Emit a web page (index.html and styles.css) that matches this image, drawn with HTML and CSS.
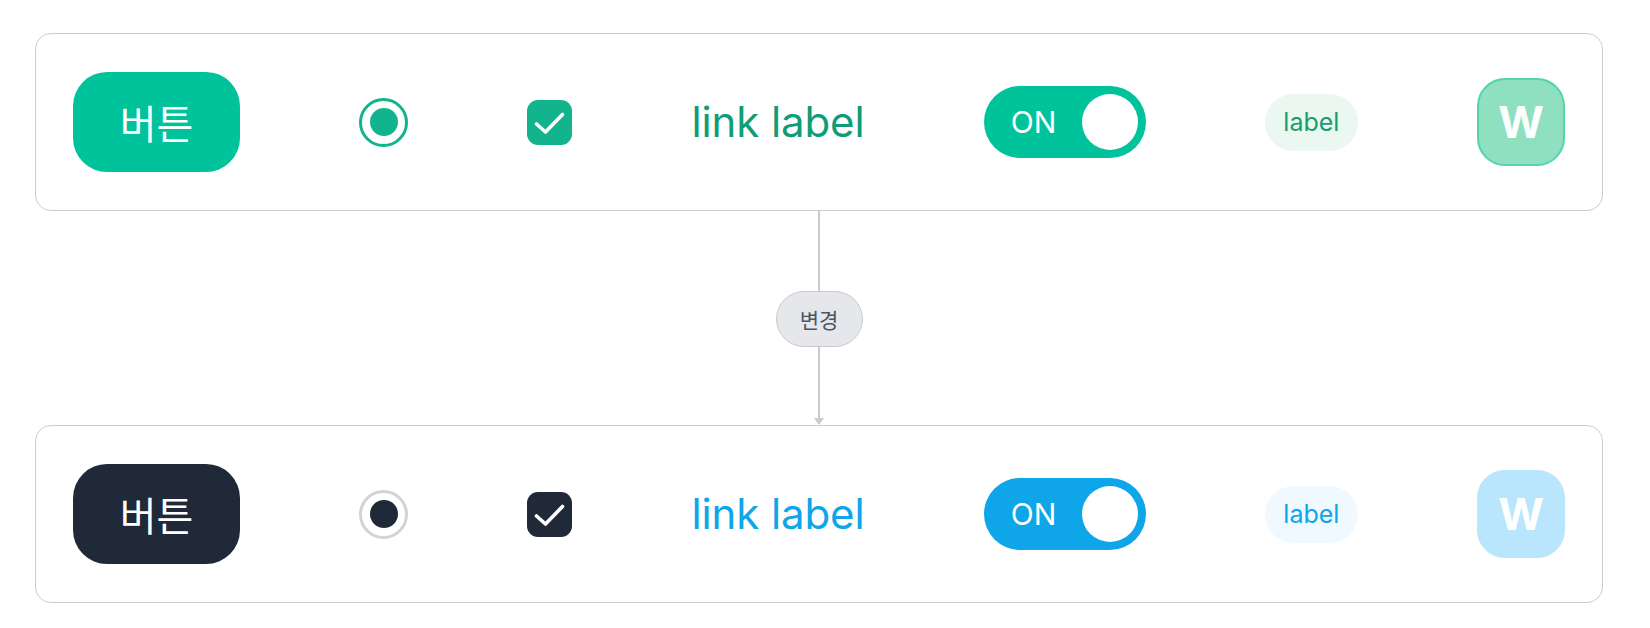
FILE: index.html
```html
<!DOCTYPE html>
<html lang="ko">
<head>
<meta charset="utf-8">
<title>Theme change</title>
<link rel="stylesheet" href="styles.css">
</head>
<body>
<div class="page">
  <div class="card theme-green">
    <button class="btn">버튼</button>
    <span class="radio"><span class="dot"></span></span>
    <span class="check">
      <svg viewBox="0 0 45 45" width="45" height="45"><polyline points="9.5,24 18.5,32 35.5,14.5" fill="none" stroke="#fff" stroke-width="3.6" stroke-linecap="round" stroke-linejoin="round"/></svg>
    </span>
    <a class="link">link label</a>
    <span class="toggle"><span class="toggle-text">ON</span><span class="knob"></span></span>
    <span class="chip">label</span>
    <span class="avatar">W</span>
  </div>

  <div class="connector">
    <div class="line line-top"></div>
    <div class="pill">변경</div>
    <div class="line line-bottom"></div>
    <div class="arrow"></div>
  </div>

  <div class="card theme-dark">
    <button class="btn">버튼</button>
    <span class="radio"><span class="dot"></span></span>
    <span class="check">
      <svg viewBox="0 0 45 45" width="45" height="45"><polyline points="9.5,24 18.5,32 35.5,14.5" fill="none" stroke="#fff" stroke-width="3.6" stroke-linecap="round" stroke-linejoin="round"/></svg>
    </span>
    <a class="link">link label</a>
    <span class="toggle"><span class="toggle-text">ON</span><span class="knob"></span></span>
    <span class="chip">label</span>
    <span class="avatar">W</span>
  </div>
</div>
</body>
</html>
```

FILE: styles.css
```css
* { box-sizing: border-box; }

html, body {
  margin: 0;
  padding: 0;
  background: #ffffff;
}

body {
  font-family: Inter, "Noto Sans", "Noto Sans CJK KR", sans-serif;
}

.page {
  width: 1650px;
  padding: 33px 47px 0 35px;
  display: flex;
  flex-direction: column;
}

.card {
  height: 178px;
  border: 1.5px solid #cdced5;
  border-radius: 16px;
  display: flex;
  align-items: center;
  justify-content: space-between;
  padding: 0 37px;
  background: #fff;
}

.btn {
  width: 167px;
  height: 100px;
  border: none;
  border-radius: 34px;
  color: #fff;
  font-family: "Noto Sans CJK KR", "Noto Sans", sans-serif;
  font-size: 40px;
  font-weight: 400;
  display: flex;
  align-items: center;
  justify-content: center;
  padding: 0;
}

.radio {
  width: 49px;
  height: 49px;
  border-radius: 50%;
  border: 3px solid;
  display: flex;
  align-items: center;
  justify-content: center;
}
.radio .dot {
  width: 28px;
  height: 28px;
  border-radius: 50%;
}

.check {
  width: 45px;
  height: 45px;
  border-radius: 11px;
  display: flex;
}

.link {
  font-size: 42px;
  font-weight: 400;
  letter-spacing: -0.1px;
  line-height: 1;
}

.toggle {
  width: 162px;
  height: 72px;
  border-radius: 36px;
  display: flex;
  align-items: center;
  justify-content: space-between;
  padding: 0 8px 0 27px;
}
.toggle-text {
  color: #fff;
  font-size: 30px;
  font-weight: 400;
}
.knob {
  width: 56px;
  height: 56px;
  border-radius: 50%;
  background: #fff;
}

.chip {
  width: 93px;
  height: 57px;
  border-radius: 29px;
  display: flex;
  align-items: center;
  justify-content: center;
  font-size: 25px;
}

.avatar {
  width: 88px;
  height: 88px;
  border-radius: 28px;
  display: flex;
  align-items: center;
  justify-content: center;
  color: #fff;
  font-size: 44px;
  font-weight: 700;
  border: 2px solid;
}

/* green theme */
.theme-green .btn { background: #00c29b; }
.theme-green .radio { border-color: #12b48d; }
.theme-green .radio .dot { background: #12b48d; }
.theme-green .check { background: #12b48d; }
.theme-green .link { color: #0f9c77; }
.theme-green .toggle { background: #00c39b; }
.theme-green .chip { background: #ebf8f2; color: #169e6e; }
.theme-green .avatar { background: #8ee0c0; border-color: #55d3ab; }

/* dark / blue theme */
.theme-dark .btn { background: #1f2937; }
.theme-dark .radio { border-color: #d1d3d8; }
.theme-dark .radio .dot { background: #1f2937; }
.theme-dark .check { background: #1f2937; }
.theme-dark .link { color: #0ea5e9; }
.theme-dark .toggle { background: #0ea5e9; }
.theme-dark .chip { background: #f0f9ff; color: #0ea5e9; }
.theme-dark .avatar { background: #bae6fd; border-color: #bae6fd; }

/* connector */
.connector {
  display: flex;
  flex-direction: column;
  align-items: center;
  height: 214px;
}
.line {
  width: 1.5px;
  background: #c9cbd1;
}
.line-top { height: 80px; }
.line-bottom { height: 71px; }
.pill {
  width: 87px;
  height: 56px;
  border-radius: 28px;
  background: #e5e7eb;
  border: 1.5px solid #c8cad0;
  color: #4b5563;
  font-family: "Noto Sans CJK KR", "Noto Sans", sans-serif;
  font-size: 21px;
  display: flex;
  align-items: center;
  justify-content: center;
}
.arrow {
  width: 0;
  height: 0;
  border-left: 5px solid transparent;
  border-right: 5px solid transparent;
  border-top: 7px solid #c9cbd1;
}
```
